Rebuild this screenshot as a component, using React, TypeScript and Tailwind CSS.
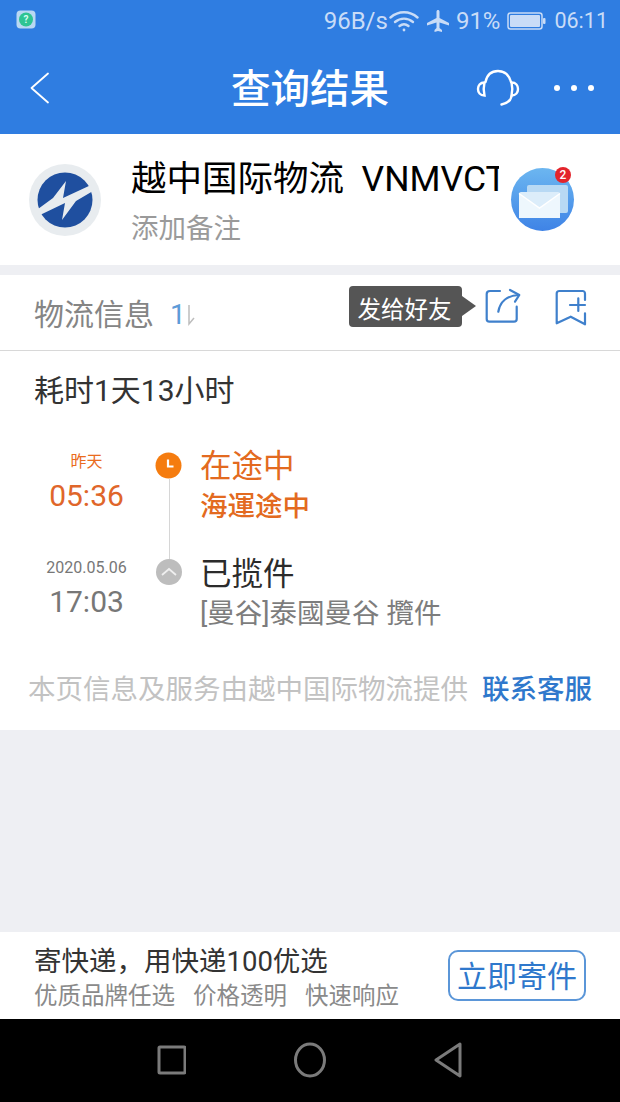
const FONT = "font-['Roboto','Noto_Sans_CJK_SC',sans-serif]";

function StatusBar() {
  return (
    <div className="flex h-[42px] items-center pb-[1px] pl-[16px] pr-[12px] text-[#c9dcf7]">
      <svg className="-mt-[2px]" width="20" height="20" viewBox="0 0 20 20">
        <rect x="0.5" y="0.5" width="19" height="18" rx="4" fill="#b9d8f2" />
        <circle cx="10" cy="9.500" r="7" fill="#2fc493" />
        <text x="10" y="13" fontSize="10" fontWeight="700" textAnchor="middle" fill="#d8fff0">?</text>
      </svg>
      <div className="ml-auto flex items-center text-[24px] leading-none">
        <span>96B/s</span>
        <svg className="ml-[1px]" width="30" height="22" viewBox="0 0 30 22" fill="none" stroke="#c9dcf7" strokeWidth="2.400" strokeLinecap="round">
          <path d="M1.500 7.500C9.500 .5 20.500 .5 28.500 7.500" />
          <path d="M6 12C11.500 7.500 18.500 7.500 24 12" />
          <path d="M10.500 16C13.200 13.800 16.800 13.800 19.500 16" />
          <circle cx="15" cy="20" r="1.400" fill="#c9dcf7" stroke="none" />
        </svg>
        <svg className="ml-[8px]" width="22" height="22" viewBox="0 0 22 22" fill="#c9dcf7">
          <path d="M9.500 1.500C9.500.6 10.200 0 11 0s1.500.6 1.500 1.500V8l9.500 5v2.500l-9.500-3v5.500l2.500 2V22L11 21l-3.500 1v-2l2-2v-5.500L0 15.500V13l9.500-5z" />
        </svg>
        <span className="ml-[7px]">91%</span>
        <svg className="ml-[7px]" width="39" height="22" viewBox="0 0 39 22">
          <rect x="1" y="3" width="34" height="16" rx="2.500" fill="none" stroke="#c9dcf7" strokeWidth="1.500" />
          <rect x="3" y="5" width="30" height="12" rx="1" fill="#c9dcf7" />
          <rect x="36" y="8" width="2.500" height="6" rx="1" fill="#c9dcf7" />
        </svg>
        <span className="ml-[8px] text-[21.5px]">06:11</span>
      </div>
    </div>
  );
}

function NavBar() {
  return (
    <div className="relative flex h-[92px] items-center justify-center">
      <svg className="absolute left-[29px] top-[30px]" width="22" height="32" viewBox="0 0 22 32" fill="none" stroke="#fff" strokeWidth="1.800" strokeLinecap="round" strokeLinejoin="round">
        <path d="M19 1.500 2.500 16 19 30.500" />
      </svg>
      <span className="pt-[3px] text-[39.5px] font-medium leading-none text-white">查询结果</span>
      <svg className="absolute left-[476px] top-[27px]" width="46" height="38" viewBox="0 0 46 38" fill="none" stroke="#fff" strokeWidth="2.400" strokeLinecap="round">
        <path d="M9.500 13C11 5.500 16 2 22 2s11 3.500 13 11" />
        <path d="M8.500 13.500C4 13.500 2 16.500 2 20s2 6.500 6.500 6.500c-1-4-1-9 0-13z" />
        <path d="M35.500 13.500c4.500 0 6.500 3 6.500 6.500s-2 6.500-6.500 6.500c1-4 1-9 0-13z" />
        <path d="M35.500 27.500c-1 4.500-4.500 7-10 8" />
      </svg>
      <div className="absolute left-[554px] top-[43px] flex gap-[11px]">
        <span className="h-[6px] w-[6px] rounded-full bg-white" />
        <span className="h-[6px] w-[6px] rounded-full bg-white" />
        <span className="h-[6px] w-[6px] rounded-full bg-white" />
      </div>
    </div>
  );
}

function CarrierLogo() {
  return (
    <svg width="72" height="72" viewBox="0 0 72 72">
      <circle cx="36" cy="36" r="36" fill="#e8ecef" />
      <circle cx="36" cy="36" r="27.500" fill="#1f4f9f" />
      <path d="M9 45 24 34 37 17 34 34 62 21 64 27 47 37 33 56 36 39 11 51z" fill="#e8ecef" />
    </svg>
  );
}

function MailBadge() {
  return (
    <div className="relative h-[63px] w-[63px] rounded-full bg-gradient-to-b from-[#6cb6f0] to-[#3f83e6]">
      <svg className="absolute left-[7px] top-[16px]" width="52" height="36" viewBox="0 0 52 36">
        <rect x="9" y="1" width="41" height="28" rx="2" fill="#b8d9f4" />
        <rect x="1" y="8" width="41" height="26" rx="2" fill="#dcedfa" />
        <path d="M1 9.500 21.500 24 42 9.500V34H1z" fill="#eef7fd" />
        <path d="M1 9.500 21.500 24 42 9.500" fill="none" stroke="#fff" strokeWidth="1.500" />
      </svg>
      <span className="absolute right-[3px] top-[-1px] flex h-[16px] w-[16px] items-center justify-center rounded-full bg-[#e3242b] text-[12px] font-medium leading-none text-white">
        2
      </span>
    </div>
  );
}

function CarrierCard() {
  return (
    <div className="flex h-[131px] items-center bg-white pl-[29px] pr-[46px]">
      <CarrierLogo />
      <div className="ml-[30px] w-[368px] overflow-hidden pt-[4px]">
        <div className="whitespace-nowrap text-[35.5px] leading-[46px] text-black">越中国际物流&nbsp; VNMVCT</div>
        <div className="mt-[9px] text-[27.5px] leading-[36px] text-[#9a9a9a]">添加备注</div>
      </div>
      <div className="ml-auto">
        <MailBadge />
      </div>
    </div>
  );
}

function ActionBar() {
  return (
    <div className="relative flex h-[76px] items-center border-b border-[#d8d8d8] bg-white pl-[34px] pt-[4px]">
      <span className="text-[30px] leading-none text-[#858585]">物流信息</span>
      <span className="ml-[16px] text-[28px] leading-none text-[#5d9bd8]">1</span>
      <svg width="10" height="24" viewBox="0 0 10 24" fill="none" stroke="#bdbdbd" strokeWidth="1.500">
        <path d="M3 2V21L8 15" />
      </svg>
      <div className="absolute left-[349px] top-[11px] flex h-[41px] w-[113px] items-center justify-center rounded-[4px] bg-[#555555] pr-[2px] pt-[8px] text-[23.5px] leading-none text-white">
        发给好友
        <span className="absolute left-[113px] top-[10px] h-0 w-0 border-y-[10px] border-l-[14px] border-y-transparent border-l-[#555555]" />
      </div>
      <svg className="absolute left-[484px] top-[13px]" width="38" height="38" viewBox="0 0 38 38" fill="none" stroke="#3f80cc" strokeWidth="2.200" strokeLinecap="round" strokeLinejoin="round">
        <path d="M16 3H6C4 3 2.700 4.300 2.700 6v25c0 1.700 1 2.700 2.700 2.700h24.600c1.700 0 2.700-1 2.700-2.700V18.700" />
        <path d="M14.300 23.700C16 14 23 7.500 35 7" />
        <path d="M26 2l9.300 5L31 13.700" />
      </svg>
      <svg className="absolute left-[554px] top-[13px]" width="34" height="40" viewBox="0 0 34 40" fill="none" stroke="#3f80cc" strokeWidth="2.200" strokeLinecap="round" strokeLinejoin="round">
        <path d="M31 12V5.500C31 4 30 3 28.500 3H5.500C4 3 2.700 4 2.700 5.500V35.300L16.700 28.700 31 36.300V25.300" />
        <path d="M16 17h15M24.300 10.300V23" />
      </svg>
    </div>
  );
}

function Timeline() {
  return (
    <div className="mt-[38px] flex">
      <div className="w-[173px] pt-[5px] text-center">
        <div className="text-[16px] leading-[20px] text-[#ea6c1e]">昨天</div>
        <div className="mt-[5px] text-[30px] leading-[38px] text-[#e0662a]">05:36</div>
        <div className="mt-[43px] text-[16px] leading-[20px] text-[#777777]">2020.05.06</div>
        <div className="mt-[5px] text-[30px] leading-[38px] text-[#777777]">17:03</div>
      </div>
      <div className="-ml-[4px] flex w-0 flex-col items-center">
        <div className="-ml-[1px] mt-[5px] flex-none">
          <svg width="27" height="27" viewBox="0 0 27 27">
            <circle cx="13.500" cy="13.500" r="13" fill="#f57c0f" />
            <path d="M13 7.500v7h5.500" fill="none" stroke="#fff" strokeWidth="2.200" />
          </svg>
        </div>
        <div className="h-[80px] w-px flex-none bg-[#d6d6d6]" />
        <div className="flex-none">
          <svg width="26" height="26" viewBox="0 0 26 26">
            <circle cx="13" cy="13" r="13" fill="#bdbdbd" />
            <path d="M6 16 13 10l7 6" fill="none" stroke="#efefef" strokeWidth="1.800" />
          </svg>
        </div>
      </div>
      <div className="ml-[31px]">
        <div className="text-[31.5px] leading-[40px] text-[#e36a20]">在途中</div>
        <div className="mt-[1px] text-[27.5px] font-medium leading-[38px] text-[#e36a20]">海運途中</div>
        <div className="mt-[29px] text-[31.5px] leading-[40px] text-[#2b2b2b]">已揽件</div>
        <div className="text-[27.5px] leading-[38px] text-[#7d7d7d]">[曼谷]泰國曼谷 攬件</div>
      </div>
    </div>
  );
}

function Footer() {
  return (
    <div className="flex h-[87px] items-center bg-white px-[34px]">
      <div className="pt-[4px]">
        <div className="text-[27.5px] leading-[34px] text-[#333333]">寄快递，用快递100优选</div>
        <div className="mt-[2px] flex gap-[18px] text-[23.5px] leading-[30px] text-[#8a8a8a]">
          <span>优质品牌任选</span>
          <span>价格透明</span>
          <span>快速响应</span>
        </div>
      </div>
      <div className="ml-auto flex h-[51px] w-[138px] items-center justify-center rounded-[10px] border-2 border-[#5b96d8] pt-[3px] text-[30px] leading-none text-[#2f78cc]">
        立即寄件
      </div>
    </div>
  );
}

function SystemNav() {
  return (
    <div className="flex h-[83px] items-center justify-center gap-[108px] bg-black pb-[2px] pr-[2px]">
      <svg width="30" height="34" viewBox="0 0 30 34" fill="none" stroke="#7b7b7b" strokeWidth="3" strokeLinejoin="round">
        <rect x="3" y="4" width="26" height="26" rx="1" />
      </svg>
      <svg width="32" height="36" viewBox="0 0 32 36" fill="none" stroke="#7b7b7b" strokeWidth="3">
        <ellipse cx="16" cy="18" rx="14.500" ry="16" />
      </svg>
      <svg width="28" height="36" viewBox="0 0 28 36" fill="none" stroke="#7b7b7b" strokeWidth="3" strokeLinejoin="round">
        <path d="M26 2 2 18l24 16z" />
      </svg>
    </div>
  );
}

export default function App() {
  return (
    <div className={`flex h-[1102px] w-[620px] flex-col overflow-hidden bg-[#eeeff3] ${FONT}`}>
      <div className="h-[134px] bg-[#2f7de1]">
        <StatusBar />
        <NavBar />
      </div>
      <CarrierCard />
      <div className="mt-[10px]">
        <ActionBar />
      </div>
      <div className="h-[379px] bg-white">
        <div className="pl-[34px] pt-[22px] text-[30px] leading-[36px] text-[#333333]">耗时1天13小时</div>
        <Timeline />
        <div className="mt-[39px] flex items-center pl-[28px]">
          <span className="text-[27.5px] leading-[36px] text-[#c2c2c2]">本页信息及服务由越中国际物流提供</span>
          <span className="ml-[14px] text-[27.5px] font-medium leading-[36px] text-[#2f78cc]">联系客服</span>
        </div>
      </div>
      <div className="flex-1" />
      <Footer />
      <SystemNav />
    </div>
  );
}
